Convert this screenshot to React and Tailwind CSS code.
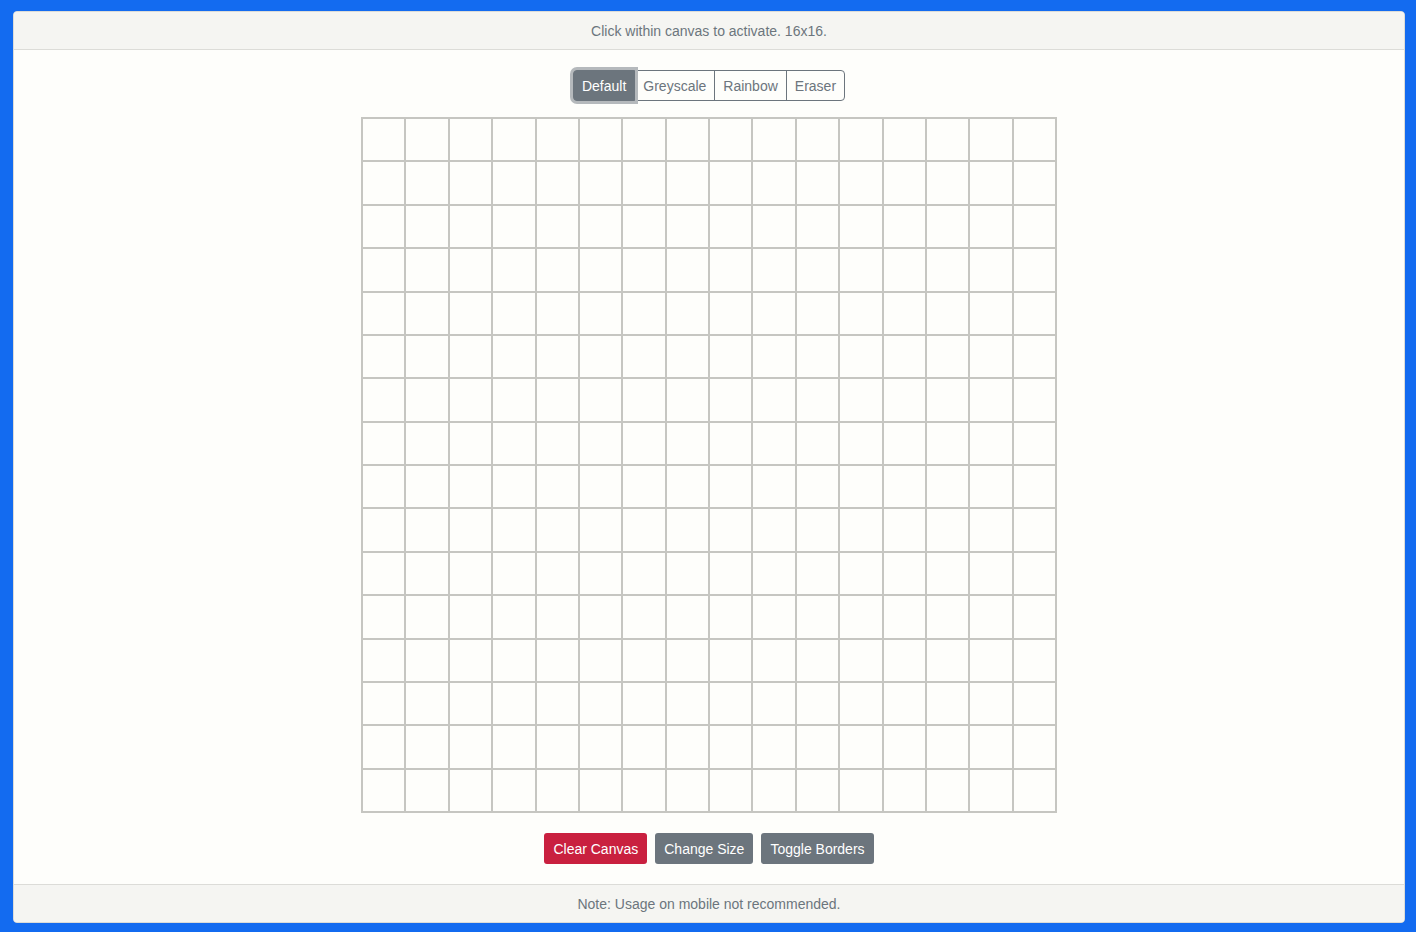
import React, { useState } from 'react';

const SIZE = 16;
const MODES = ['Default', 'Greyscale', 'Rainbow', 'Eraser'];

const App = () => {
  const [mode, setMode] = useState('Default');
  const cells = Array.from({ length: SIZE * SIZE });

  return (
    <div className="min-h-[932px] bg-[#136bf0] pl-[13px] pr-[11px] pt-[11px] pb-[9px] font-['Liberation_Sans',Arial,sans-serif] text-[14px]">
      <div className="flex h-[912px] flex-col overflow-hidden rounded-[4px] border border-[#dcdcd8] bg-[#fefefb]">
        <div className="flex h-[38px] shrink-0 items-center justify-center border-b border-[#dcdcd8] bg-[#f5f5f2] pt-[2px] text-[#6c757d]">
          Click within canvas to activate. 16x16.
        </div>

        <div className="flex flex-1 flex-col items-center pt-[20px]">
          <div className="flex h-[31px]">
            {MODES.map((m, i) => {
              const active = m === mode;
              return (
                <button
                  key={m}
                  onClick={() => setMode(m)}
                  className={
                    active
                      ? 'relative z-10 rounded-l-[4px] border border-[#6c757d] bg-[#6c757d] px-[8px] pt-px text-white shadow-[0_0_0_3px_#b5b9bc]'
                      : `-ml-px border border-[#6c757d] px-[8px] pt-px text-[#6c757d] ${i === MODES.length - 1 ? 'rounded-r-[4px]' : ''}`
                  }
                >
                  {m}
                </button>
              );
            })}
          </div>

          <div className="mt-[16px] grid h-[696px] w-[696px] grid-cols-16 grid-rows-16 border border-[#c6c6c1]">
            {cells.map((_, i) => (
              <div key={i} className="border border-[#c6c6c1]" />
            ))}
          </div>

          <div className="mt-[20px] flex gap-[8px]">
            <button className="h-[31px] rounded-[3px] bg-[#c9203f] px-[9px] pt-px text-white">Clear Canvas</button>
            <button className="h-[31px] rounded-[3px] bg-[#6c757d] px-[9px] pt-px text-white">Change Size</button>
            <button className="h-[31px] rounded-[3px] bg-[#6c757d] px-[9px] pt-px text-white">Toggle Borders</button>
          </div>
        </div>

        <div className="flex h-[38px] shrink-0 items-center justify-center border-t border-[#dcdcd8] bg-[#f5f5f2] pt-[2px] text-[#6c757d]">
          Note: Usage on mobile not recommended.
        </div>
      </div>
    </div>
  );
};

export default App;
